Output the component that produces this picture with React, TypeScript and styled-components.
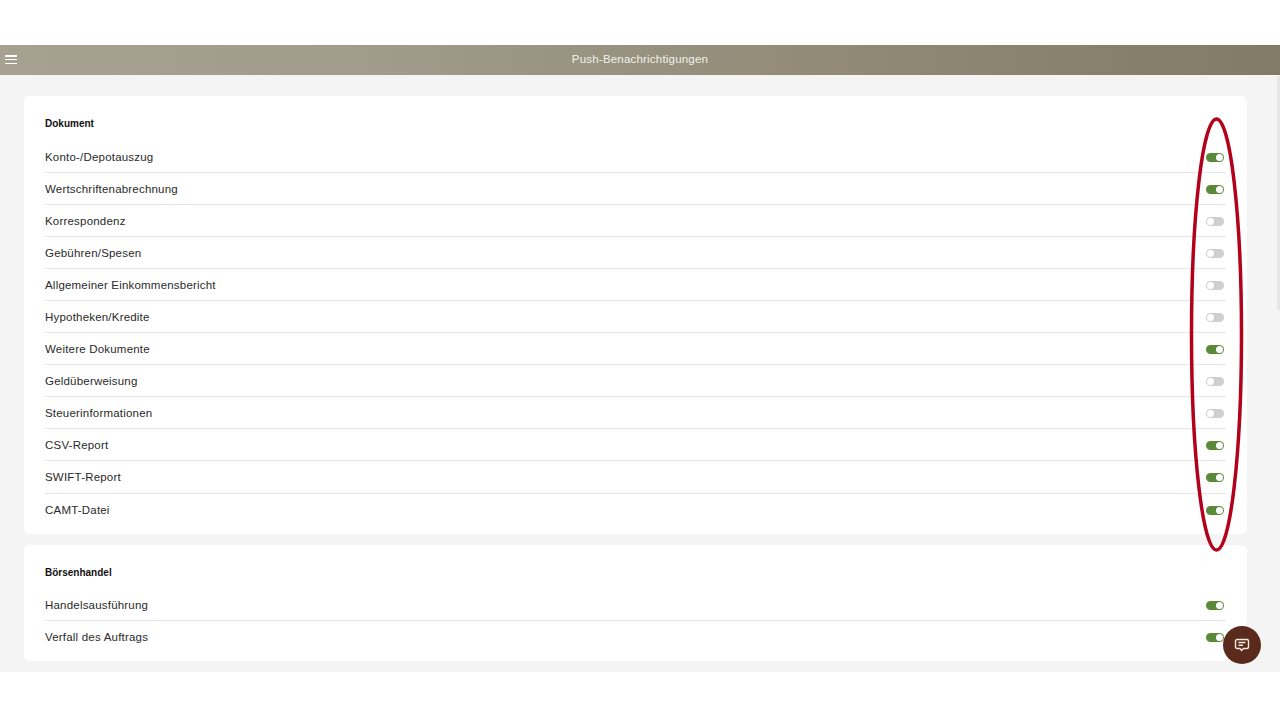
import React from "react";
import styled, { createGlobalStyle } from "styled-components";

const GlobalStyle = createGlobalStyle`
  html, body {
    margin: 0;
    padding: 0;
    background: #fff;
    font-family: "Liberation Sans", Arial, sans-serif;
    overflow: hidden;
  }
`;

const Page = styled.div`
  position: relative;
  width: 1280px;
  height: 720px;
  padding-top: 45px;
  box-sizing: border-box;
  overflow: hidden;
`;

const Header = styled.header`
  height: 30px;
  padding-bottom: 2px;
  box-sizing: border-box;
  display: flex;
  align-items: center;
  justify-content: center;
  position: relative;
  background: linear-gradient(90deg, #a6a191 0%, #a09b8a 30%, #8e8874 70%, #827b65 100%);
  color: #f4f2ec;
  font-size: 11.5px;
  letter-spacing: 0.2px;
`;

const MenuButton = styled.div`
  position: absolute;
  left: 5px;
  top: 10px;
  width: 12px;
  height: 9px;
  display: flex;
  flex-direction: column;
  justify-content: space-between;

  span {
    display: block;
    height: 1.5px;
    background: #fff;
  }
`;

const Main = styled.main`
  height: 597px;
  box-sizing: border-box;
  background: #f4f4f4;
  padding: 21px 33px 0 24px;
  display: flex;
  flex-direction: column;
  gap: 11px;
`;

const Card = styled.section`
  background: #fff;
  border-radius: 6px;
  padding: 21px 21px 8px 21px;
`;

const CardTitle = styled.h2<{ $gap: number }>`
  margin: 0 0 ${(p) => p.$gap}px;
  height: 14px;
  line-height: 14px;
  font-size: 10px;
  font-weight: 700;
  color: #111;
`;

const Row = styled.div<{ $tall?: boolean }>`
  height: ${(p) => (p.$tall ? 33 : 32)}px;
  display: flex;
  align-items: center;
  justify-content: space-between;
  border-bottom: 1px solid #e6e6e6;
  box-sizing: border-box;
  font-size: 11.5px;
  letter-spacing: 0.2px;
  color: #2a2a2a;

  &:last-child {
    border-bottom: none;
  }
`;

const Toggle = styled.span<{ $on: boolean }>`
  width: 18px;
  height: 9px;
  margin: 1px 2px 0 0;
  border-radius: 5px;
  background: ${(p) => (p.$on ? "#5a8a3a" : "#cfcfcf")};
  position: relative;

  &::after {
    content: "";
    position: absolute;
    top: 1px;
    left: ${(p) => (p.$on ? "10px" : "1px")};
    width: 7px;
    height: 7px;
    border-radius: 50%;
    background: #fff;
  }
`;

const Marker = styled.svg`
  position: absolute;
  left: 1185px;
  top: 112px;
`;

const ScrollThumb = styled.div`
  position: absolute;
  right: 0;
  top: 76px;
  width: 3px;
  height: 234px;
  background: #e6e6e6;
`;

const ChatButton = styled.div`
  position: absolute;
  left: 1223px;
  top: 626px;
  width: 38px;
  height: 38px;
  border-radius: 50%;
  background: #5a2a1c;
  display: flex;
  align-items: center;
  justify-content: center;
`;

const documents: [string, boolean][] = [
  ["Konto-/Depotauszug", true],
  ["Wertschriftenabrechnung", true],
  ["Korrespondenz", false],
  ["Gebühren/Spesen", false],
  ["Allgemeiner Einkommensbericht", false],
  ["Hypotheken/Kredite", false],
  ["Weitere Dokumente", true],
  ["Geldüberweisung", false],
  ["Steuerinformationen", false],
  ["CSV-Report", true],
  ["SWIFT-Report", true],
  ["CAMT-Datei", true],
];

const trading: [string, boolean][] = [
  ["Handelsausführung", true],
  ["Verfall des Auftrags", true],
];

const App = () => {
  return (
    <Page>
      <GlobalStyle />
      <Header>
        <MenuButton>
          <span />
          <span />
          <span />
        </MenuButton>
        Push-Benachrichtigungen
      </Header>
      <Main>
        <Card>
          <CardTitle $gap={10}>Dokument</CardTitle>
          {documents.map(([label, on], i) => (
            <Row key={label} $tall={i === documents.length - 2}>
              {label}
              <Toggle $on={on} />
            </Row>
          ))}
        </Card>
        <Card>
          <CardTitle $gap={9}>Börsenhandel</CardTitle>
          {trading.map(([label, on]) => (
            <Row key={label}>
              {label}
              <Toggle $on={on} />
            </Row>
          ))}
        </Card>
      </Main>
      <ScrollThumb />
      <Marker width="64" height="446" viewBox="0 0 64 446">
        <ellipse cx="31.5" cy="222.5" rx="25" ry="215.5" fill="none" stroke="#b3001b" strokeWidth="3.5" />
      </Marker>
      <ChatButton>
        <svg width="16" height="16" viewBox="0 0 16 16" fill="none" stroke="#f6ece4" strokeWidth="1.4">
          <path d="M3 2.5h10a1.5 1.5 0 0 1 1.5 1.5v6a1.5 1.5 0 0 1-1.5 1.5H9.5L7.5 13.5l-1.5-2H3A1.5 1.5 0 0 1 1.5 10V4A1.5 1.5 0 0 1 3 2.5z" />
          <path d="M4.5 5.5h7M4.5 8.2h4.5" />
        </svg>
      </ChatButton>
    </Page>
  );
};

export default App;
